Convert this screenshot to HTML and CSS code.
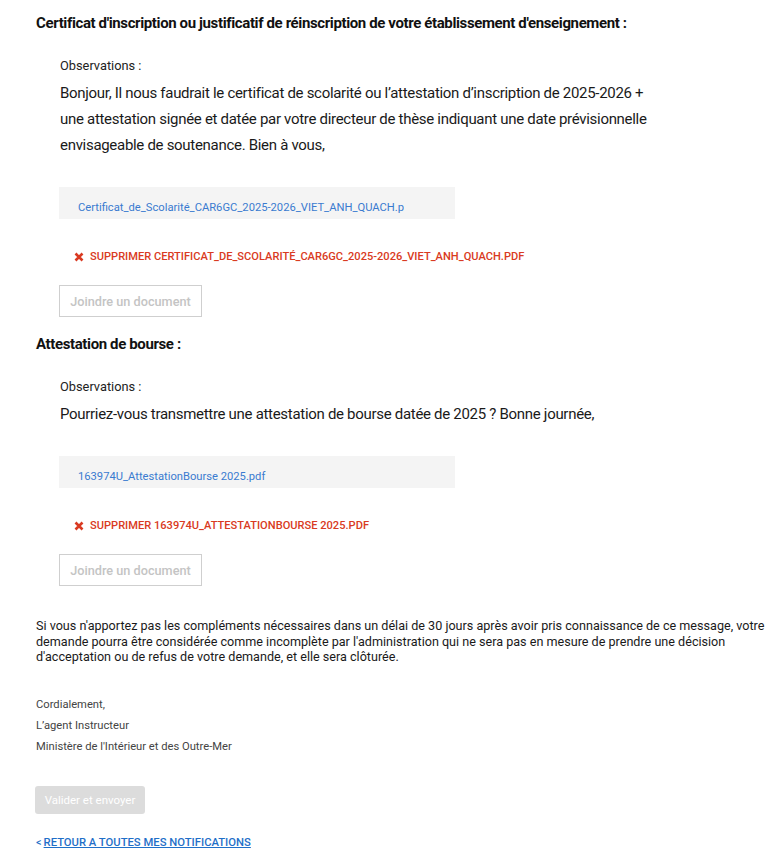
FILE: index.html
```html
<!DOCTYPE html>
<html lang="fr">
<head>
<meta charset="utf-8">
<title>Notification</title>
<link rel="stylesheet" href="styles.css">
</head>
<body>
<main class="page">
  <section class="piece">
    <h2 class="piece-title">Certificat d'inscription ou justificatif de réinscription de votre établissement d'enseignement :</h2>
    <div class="piece-body">
      <div class="obs-label">Observations :</div>
      <p class="obs-text">Bonjour, Il nous faudrait le certificat de scolarité ou l’attestation d’inscription de 2025-2026 + une attestation signée et datée par votre directeur de thèse indiquant une date prévisionnelle envisageable de soutenance. Bien à vous,</p>
      <div class="file-box"><a class="file-link" href="#">Certificat_de_Scolarité_CAR6GC_2025-2026_VIET_ANH_QUACH.pdf</a></div>
      <div class="delete-row"><svg class="delete-icon" width="10" height="10" viewBox="0 0 10 10"><path d="M1.5 1.5 L8.5 8.5 M8.5 1.5 L1.5 8.5" stroke="#d93a22" stroke-width="2.6" stroke-linecap="butt"/></svg><span class="delete-text">Supprimer Certificat_de_Scolarité_CAR6GC_2025-2026_VIET_ANH_QUACH.pdf</span></div>
      <button class="btn-attach" type="button">Joindre un document</button>
    </div>
  </section>
  <section class="piece">
    <h2 class="piece-title">Attestation de bourse :</h2>
    <div class="piece-body">
      <div class="obs-label">Observations :</div>
      <p class="obs-text">Pourriez-vous transmettre une attestation de bourse datée de 2025 ? Bonne journée,</p>
      <div class="file-box"><a class="file-link" href="#">163974U_AttestationBourse 2025.pdf</a></div>
      <div class="delete-row"><svg class="delete-icon" width="10" height="10" viewBox="0 0 10 10"><path d="M1.5 1.5 L8.5 8.5 M8.5 1.5 L1.5 8.5" stroke="#d93a22" stroke-width="2.6" stroke-linecap="butt"/></svg><span class="delete-text">Supprimer 163974U_AttestationBourse 2025.pdf</span></div>
      <button class="btn-attach" type="button">Joindre un document</button>
    </div>
  </section>
  <p class="notice">Si vous n'apportez pas les compléments nécessaires dans un délai de 30 jours après avoir pris connaissance de ce message, votre demande pourra être considérée comme incomplète par l'administration qui ne sera pas en mesure de prendre une décision d'acceptation ou de refus de votre demande, et elle sera clôturée.</p>
  <div class="signature">
    <div>Cordialement,</div>
    <div>L’agent Instructeur</div>
    <div>Ministère de l'Intérieur et des Outre-Mer</div>
  </div>
  <button class="btn-submit" type="button">Valider et envoyer</button>
  <a class="back-link" href="#"><span class="chev">&lt;</span><span class="back-text">Retour a toutes mes notifications</span></a>
</main>
</body>
</html>
```
FILE: styles.css
```css
html, body {
  margin: 0;
  padding: 0;
  background: #fff;
  overflow-x: hidden;
}
body {
  font-family: Roboto, "Liberation Sans", Arial, sans-serif;
  color: #1a1a1a;
}
.page {
  padding: 14px 0 0 36px;
  width: 760px;
}
.piece {
  display: flex;
  flex-direction: column;
}
.piece-title {
  margin: 0;
  font-size: 15px;
  line-height: 19px;
  font-weight: 700;
  color: #111;
  letter-spacing: -0.38px;
}
.piece-body {
  padding: 26px 0 0 24px;
  display: flex;
  flex-direction: column;
  align-items: flex-start;
}
.obs-label {
  font-size: 12.8px;
  line-height: 14px;
  color: #222;
}
.obs-text {
  margin: 7px 0 0;
  width: 600px;
  font-size: 15px;
  line-height: 26px;
  color: #1a1a1a;
  letter-spacing: -0.3px;
}
.file-box {
  margin: 29px 0 0 -1px;
  width: 396px;
  height: 32px;
  padding: 13px 0 0 19px;
  box-sizing: border-box;
  background: #f4f4f4;
}
.file-link {
  display: block;
  width: 326px;
  overflow: hidden;
  white-space: nowrap;
  font-size: 11.2px;
  line-height: 15px;
  color: #3a7bd0;
  text-decoration: none;
}
.delete-row {
  margin: 31px 0 0 14px;
  display: flex;
  align-items: center;
  gap: 6px;
  height: 14px;
}
.delete-icon {
  display: block;
}
.delete-text {
  font-size: 11.1px;
  line-height: 14px;
  font-weight: 500;
  text-transform: uppercase;
  color: #d93a22;
}
.btn-attach {
  margin: 21px 0 0 -1px;
  width: 143px;
  height: 32px;
  padding: 0;
  background: #fff;
  border: 1px solid #cfcfcf;
  font-family: Roboto, "Liberation Sans", Arial, sans-serif;
  font-size: 12.7px;
  font-weight: 500;
  color: #c4c4c4;
  border-radius: 0;
}
.piece + .piece {
  margin-top: 18px;
}
.notice {
  margin: 32px 0 0;
  width: 752px;
  font-size: 12.6px;
  line-height: 15.5px;
  color: #1a1a1a;
}
.signature {
  margin-top: 29px;
  font-size: 11.2px;
  line-height: 21px;
  color: #444;
}
.btn-submit {
  display: block;
  margin: 29px 0 0 -1px;
  width: 110px;
  height: 28px;
  padding: 0;
  border: none;
  border-radius: 3px;
  background: #dcdcdc;
  color: #fff;
  font-family: Roboto, "Liberation Sans", Arial, sans-serif;
  font-size: 11.5px;
}
.back-link {
  display: inline-flex;
  align-items: baseline;
  margin-top: 22px;
  color: #1f6fc8;
  font-size: 11.25px;
  line-height: 14px;
  text-decoration: none;
}
.chev {
  color: #1f6fc8;
  font-size: 11px;
  margin-right: 2px;
}
.back-text {
  text-transform: uppercase;
  font-weight: 500;
  text-decoration: underline;
}
```
